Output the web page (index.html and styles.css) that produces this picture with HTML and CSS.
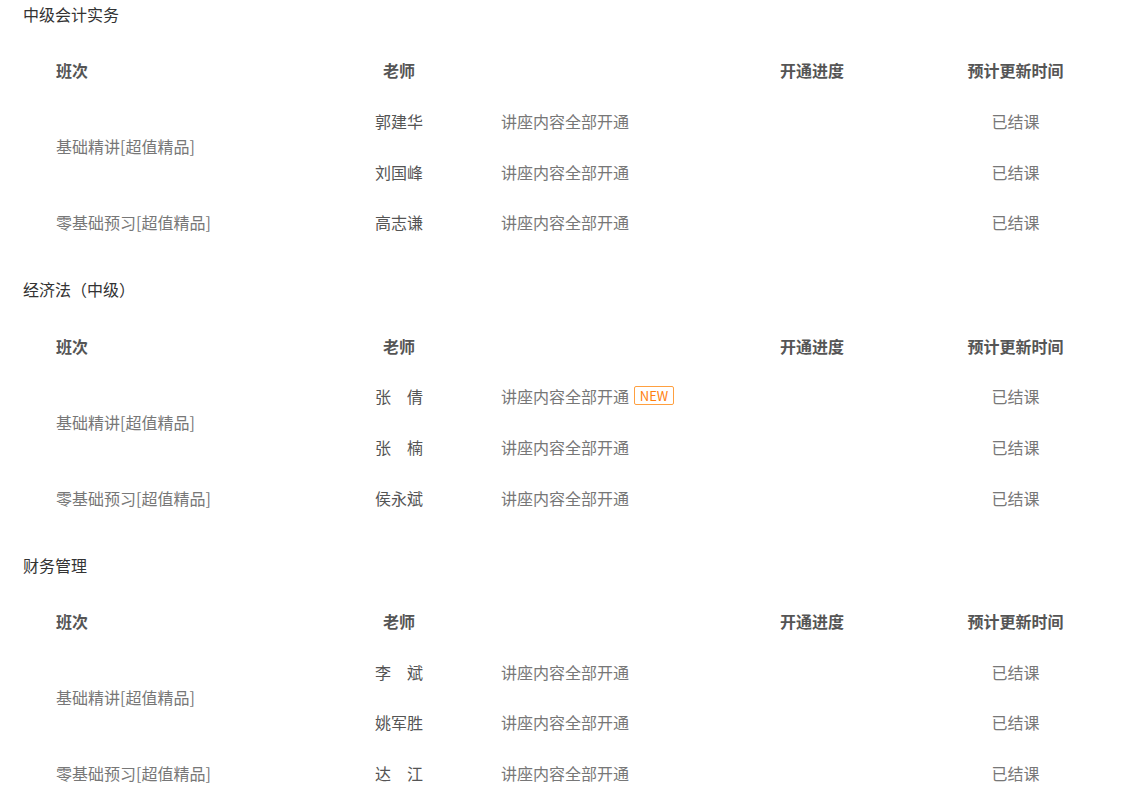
FILE: index.html
```html
<!DOCTYPE html>
<html lang="zh-CN">
<head>
<meta charset="utf-8">
<title>课程开通进度</title>
<link rel="stylesheet" href="styles.css">
</head>
<body>
<div class="page">
  <section class="subject">
    <h2 class="subject-title">中级会计实务</h2>
    <table class="course-table">
      <colgroup><col class="c-class"><col class="c-teacher"><col class="c-progress"><col class="c-status"><col class="c-time"></colgroup>
      <thead><tr><th class="th-class">班次</th><th>老师</th><th></th><th>开通进度</th><th>预计更新时间</th></tr></thead>
      <tbody>
        <tr><td class="td-class" rowspan="2">基础精讲[超值精品]</td><td class="td-teacher">郭建华</td><td class="td-progress">讲座内容全部开通</td><td></td><td class="td-time">已结课</td></tr>
        <tr><td class="td-teacher">刘国峰</td><td class="td-progress">讲座内容全部开通</td><td></td><td class="td-time">已结课</td></tr>
        <tr><td class="td-class">零基础预习[超值精品]</td><td class="td-teacher">高志谦</td><td class="td-progress">讲座内容全部开通</td><td></td><td class="td-time">已结课</td></tr>
      </tbody>
    </table>
  </section>
  <section class="subject">
    <h2 class="subject-title">经济法（中级）</h2>
    <table class="course-table">
      <colgroup><col class="c-class"><col class="c-teacher"><col class="c-progress"><col class="c-status"><col class="c-time"></colgroup>
      <thead><tr><th class="th-class">班次</th><th>老师</th><th></th><th>开通进度</th><th>预计更新时间</th></tr></thead>
      <tbody>
        <tr><td class="td-class" rowspan="2">基础精讲[超值精品]</td><td class="td-teacher">张　倩</td><td class="td-progress">讲座内容全部开通<span class="badge-new">NEW</span></td><td></td><td class="td-time">已结课</td></tr>
        <tr><td class="td-teacher">张　楠</td><td class="td-progress">讲座内容全部开通</td><td></td><td class="td-time">已结课</td></tr>
        <tr><td class="td-class">零基础预习[超值精品]</td><td class="td-teacher">侯永斌</td><td class="td-progress">讲座内容全部开通</td><td></td><td class="td-time">已结课</td></tr>
      </tbody>
    </table>
  </section>
  <section class="subject">
    <h2 class="subject-title">财务管理</h2>
    <table class="course-table">
      <colgroup><col class="c-class"><col class="c-teacher"><col class="c-progress"><col class="c-status"><col class="c-time"></colgroup>
      <thead><tr><th class="th-class">班次</th><th>老师</th><th></th><th>开通进度</th><th>预计更新时间</th></tr></thead>
      <tbody>
        <tr><td class="td-class" rowspan="2">基础精讲[超值精品]</td><td class="td-teacher">李　斌</td><td class="td-progress">讲座内容全部开通</td><td></td><td class="td-time">已结课</td></tr>
        <tr><td class="td-teacher">姚军胜</td><td class="td-progress">讲座内容全部开通</td><td></td><td class="td-time">已结课</td></tr>
        <tr><td class="td-class">零基础预习[超值精品]</td><td class="td-teacher">达　江</td><td class="td-progress">讲座内容全部开通</td><td></td><td class="td-time">已结课</td></tr>
      </tbody>
    </table>
  </section>
</div>
</body>
</html>
```
FILE: styles.css
```css
html, body {
  margin: 0;
  padding: 0;
  background: #fff;
}
body {
  font-family: "Noto Sans CJK SC", "Microsoft YaHei", sans-serif;
  font-size: 16px;
  color: #666;
}
.page {
  display: flex;
  flex-direction: column;
  gap: 27.67px;
}
.subject-title {
  margin: 0 0 17px 23px;
  font-size: 16px;
  font-weight: normal;
  line-height: 28px;
  color: #333;
}
.course-table {
  border-collapse: collapse;
  table-layout: fixed;
  width: 1119px;
}
.c-class { width: 350px; }
.c-teacher { width: 98px; }
.c-progress { width: 264px; }
.c-status { width: 200px; }
.c-time { width: 207px; }
.course-table th,
.course-table td {
  height: 50.67px;
  padding: 0;
  line-height: 20px;
  text-align: center;
  vertical-align: middle;
  white-space: nowrap;
}
.course-table th {
  font-weight: bold;
  color: #555;
}
.course-table .th-class,
.course-table .td-class {
  text-align: left;
  padding-left: 56px;
}
.td-class { color: #777; }
.td-teacher { color: #555; }
.course-table .td-progress {
  text-align: left;
  padding-left: 53px;
  color: #777;
}
.td-time { color: #777; }
.badge-new {
  display: inline-block;
  box-sizing: border-box;
  margin-left: 5px;
  width: 40px;
  height: 19px;
  line-height: 17px;
  border: 1px solid #ffa040;
  border-radius: 2px;
  font-size: 13px;
  text-align: center;
  color: #ff7f0f;
  vertical-align: top;
}
```
